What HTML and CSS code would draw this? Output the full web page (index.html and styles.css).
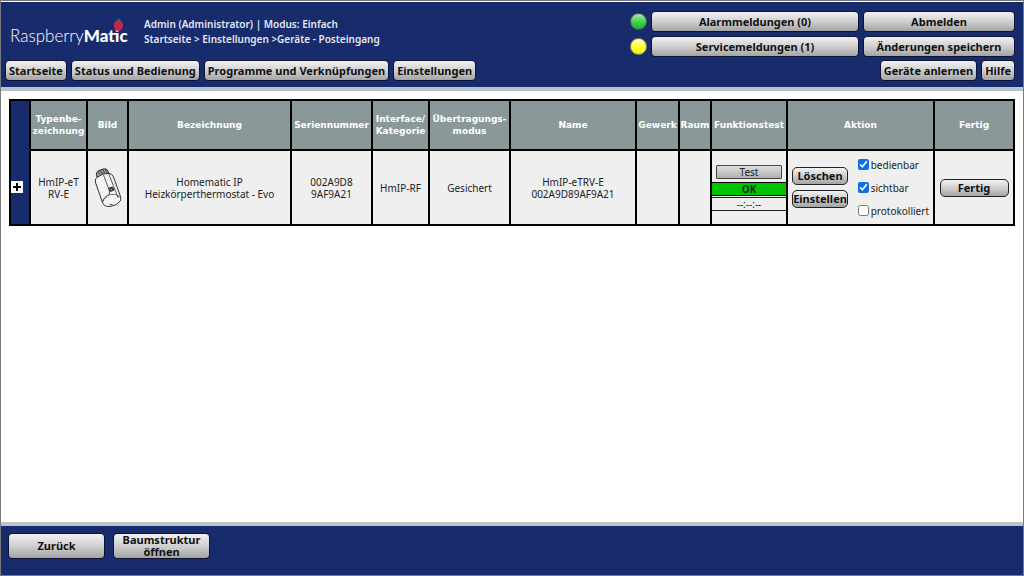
FILE: index.html
```html
<!DOCTYPE html>
<html lang="de">
<head>
<meta charset="utf-8">
<title>RaspberryMatic – Posteingang</title>
<link rel="stylesheet" href="styles.css">
</head>
<body>
<div class="page">
  <header class="header">
    <div class="top">
      <div class="logo">
        <span class="logo-light">Raspberry</span><span class="logo-bold">Matic</span>
        <svg class="berry" viewBox="0 0 10 14" aria-hidden="true">
          <path d="M5 4L2 2.5L4.2 2.4L5 0L6 2.3L8.2 2.2Z" fill="#4c7a5c"/>
          <path d="M5 3.500C8 2.600 9.700 4.500 9.500 7.500C9.300 10.500 7 13 5 13.500C3 13 .6 10.500.5 7.500C.3 4.500 2 2.600 5 3.500Z" fill="#cf2350"/>
          <path d="M2.500 6.500h5M3 9.500h4" stroke="#a81e4a" stroke-width=".6"/>
        </svg>
      </div>
      <div class="info">
        <div>Admin (Administrator) | Modus: Einfach</div>
        <nav>Startseite &gt; Einstellungen &gt;Geräte - Posteingang</nav>
      </div>
      <div class="status">
        <span class="lamp green"></span>
        <button class="btn">Alarmmeldungen (0)</button>
        <button class="btn">Abmelden</button>
        <span class="lamp yellow"></span>
        <button class="btn">Servicemeldungen (1)</button>
        <button class="btn">Änderungen speichern</button>
      </div>
    </div>
    <nav class="menu">
      <button class="btn">Startseite</button>
      <button class="btn">Status und Bedienung</button>
      <button class="btn">Programme und Verknüpfungen</button>
      <button class="btn">Einstellungen</button>
      <button class="btn push">Geräte anlernen</button>
      <button class="btn">Hilfe</button>
    </nav>
  </header>

  <main class="content">
    <table class="devices">
      <colgroup>
        <col class="c-tree"><col class="c-type"><col class="c-image"><col class="c-label"><col class="c-serial"><col class="c-interface"><col class="c-mode"><col class="c-name"><col class="c-trade"><col class="c-room"><col class="c-test"><col class="c-action"><col class="c-done">
      </colgroup>
      <thead>
        <tr>
          <td class="tree"></td>
          <th>Typenbe-<br>zeichnung</th>
          <th>Bild</th>
          <th>Bezeichnung</th>
          <th>Seriennummer</th>
          <th>Interface/<br>Kategorie</th>
          <th>Übertragungs-<br>modus</th>
          <th>Name</th>
          <th>Gewerk</th>
          <th>Raum</th>
          <th>Funktionstest</th>
          <th>Aktion</th>
          <th>Fertig</th>
        </tr>
      </thead>
      <tbody>
        <tr>
          <td class="tree"><button class="expand" aria-label="Aufklappen"><svg viewBox="0 0 12 12"><path d="M6 2v8M2 6h8" stroke="#000" stroke-width="2"/></svg></button></td>
          <td>HmIP-eT<br>RV-E</td>
          <td>
            <svg class="device" viewBox="0 0 28 40" role="img" aria-label="HmIP-eTRV-E">
              <g fill="none" stroke="#333" stroke-linejoin="round" stroke-linecap="round">
                <path d="M2.500 7.500Q1.500 4 5 2.500L9 1Q13 0 14 3L15 5.500Q9 4.500 3.500 9Z" fill="#999"/>
                <path d="M4 3.500l2 3M6.500 2.500l1.500 3M9 1.500l1.500 3.500M11.500 1.200l1.300 3.500" stroke-width=".8"/>
                <path d="M3.500 9Q.5 10.500 1.300 14L8.500 34.500Q10 39 16 38.500Q23 37.500 26.300 33Q27.300 31 26.300 28L19.500 9Q18.200 5.500 15 5.500Q9 4.500 3.500 9Z" fill="#f4f4f4"/>
                <path d="M9.500 7L15.500 23Q16.500 26 13 28.500Q9 31 8.500 34M14.800 6L24 29.500" stroke-width=".8"/>
                <path d="M8.500 34Q9.500 28.500 16 26.500Q22 25 26.300 29" stroke-width=".7"/>
                <path d="M15 20L18.500 19L20 22L16.500 23.500Z" fill="#555"/>
                <circle cx="17.500" cy="21.200" r="1" fill="#ddd"/>
                <path d="M16 36.500h2" stroke-width=".8"/>
              </g>
            </svg>
          </td>
          <td>Homematic IP<br>Heizkörperthermostat - Evo</td>
          <td>002A9D8<br>9AF9A21</td>
          <td>HmIP-RF</td>
          <td>Gesichert</td>
          <td>HmIP-eTRV-E<br>002A9D89AF9A21</td>
          <td></td>
          <td></td>
          <td>
            <div class="test">
              <button class="test-btn">Test</button>
              <div class="ok">OK</div>
              <div class="time">--:--:--</div>
            </div>
          </td>
          <td>
            <div class="actions">
              <div class="action-buttons">
                <button class="btn small">Löschen</button>
                <button class="btn small">Einstellen</button>
              </div>
              <div class="checks">
                <label><input type="checkbox" checked>bedienbar</label>
                <label><input type="checkbox" checked>sichtbar</label>
                <label><input type="checkbox">protokolliert</label>
              </div>
            </div>
          </td>
          <td><button class="btn small done">Fertig</button></td>
        </tr>
      </tbody>
    </table>
  </main>

  <footer class="footer">
    <button class="btn">Zurück</button>
    <button class="btn">Baumstruktur<br>öffnen</button>
  </footer>
</div>
</body>
</html>
```
FILE: styles.css
```css
* { box-sizing: border-box; }

body {
  margin: 0;
  background: #fff;
  color: #222;
  font: 10px/12px "Noto Sans", Verdana, sans-serif;
}

button, input { font: inherit; margin: 0; }

.page {
  display: flex;
  flex-direction: column;
  min-height: 100vh;
  border: 1px solid #77797d;
}

.header {
  display: flex;
  flex-direction: column;
  gap: 3px;
  padding: 9px 8px 6px 4px;
  border-top: 1px solid #fff;
  border-bottom: 4px solid #b9c5ca;
  background: #182b6c;
}

.top { display: flex; align-items: flex-start; }

.logo {
  position: relative;
  width: 139px;
  padding: 14px 0 0 5px;
  color: #fff;
  font: 17px/22px Lato, sans-serif;
  white-space: nowrap;
}

.logo-light { font-weight: 300; }
.logo-bold { font-weight: 900; }

.berry {
  position: absolute;
  top: 7px;
  left: 108px;
  width: 11px;
  height: 14px;
}

.info {
  padding-top: 6px;
  color: #e4e8f4;
  font-weight: 600;
  line-height: 15px;
}

.status {
  display: grid;
  grid-template-columns: 17px 208px 152px;
  gap: 4px;
  align-items: center;
  margin-left: auto;
}

.lamp {
  width: 17px;
  height: 17px;
  border: 1px solid #425a68;
  border-radius: 50%;
}

.green { background: linear-gradient(#a5eaa5, #45cc4c 55%, #16b81e); }
.yellow { background: linear-gradient(#ffffb4, #ffff30 60%, #f4ee00); border-color: #8d8d60; }

.btn {
  min-height: 21px;
  padding: 0 3px;
  border: 1px solid #0c1434;
  border-radius: 4px;
  background: linear-gradient(#f2f2f2, #cfcfcf 50%, #a4a4a4);
  color: #111;
  font-size: 11px;
  font-weight: bold;
  line-height: 12px;
  white-space: nowrap;
}

.menu { display: flex; gap: 4px; }
.push { margin-left: auto; }

.content { flex: 1; padding: 8px; }

.devices {
  width: 100%;
  border-collapse: collapse;
  table-layout: fixed;
  border: 2px solid #000;
}

.devices th, .devices td {
  padding: 0;
  border: 2px solid #000;
  text-align: center;
  vertical-align: middle;
}

.devices th {
  height: 50px;
  background: #8a989a;
  color: #fff;
  font-family: "DejaVu Sans", Verdana, sans-serif;
  font-size: 9px;
  white-space: nowrap;
}

.devices td { height: 75px; background: #efefef; }
.devices thead td { height: 50px; }
.devices .tree { border-width: 0; background: #182b6c; text-align: left; }

.c-tree { width: 20px; }
.c-type { width: 57px; }
.c-image { width: 41px; }
.c-label { width: 163px; }
.c-serial { width: 81px; }
.c-interface { width: 57px; }
.c-mode { width: 81px; }
.c-trade { width: 43px; }
.c-room { width: 32px; }
.c-test { width: 76px; }
.c-action { width: 147px; }
.c-done { width: 80px; }

.expand {
  display: block;
  width: 12px;
  height: 12px;
  padding: 0;
  border: 0;
  background: #fff;
}

.expand svg { display: block; }

.device { display: block; width: 28px; height: 40px; margin: 0 auto; }

.test { display: flex; flex-direction: column; }

.test-btn {
  height: 14px;
  margin: 0 4px 3px;
  padding: 0;
  border: 1px solid #444;
  border-radius: 1px;
  background: linear-gradient(#dedede, #b0b0b0);
  color: #222;
  line-height: 12px;
}

.ok {
  border: solid #000;
  border-width: 1px 0;
  background: #00c400;
  color: #103010;
  font-weight: bold;
}

.time {
  margin-top: 1px;
  border: solid #222;
  border-width: 1px 0;
}

.actions { display: flex; justify-content: space-between; padding: 0 4px; }

.action-buttons {
  display: flex;
  flex-direction: column;
  justify-content: center;
  gap: 5px;
}

.small {
  width: 56px;
  min-height: 18px;
  padding: 0;
  border-color: #222;
  border-radius: 5px;
}

.done { width: 69px; }

.checks {
  display: flex;
  flex-direction: column;
  gap: 11px;
}

.checks label { display: flex; gap: 2px; }
.checks input { width: 11px; height: 11px; accent-color: #0f6fe6; }

.footer {
  display: flex;
  align-items: flex-start;
  gap: 8px;
  min-height: 53px;
  padding: 7px;
  border-top: 4px solid #b9c5ca;
  background: #182b6c;
}

.footer .btn { width: 97px; height: 26px; padding: 0; }
```
